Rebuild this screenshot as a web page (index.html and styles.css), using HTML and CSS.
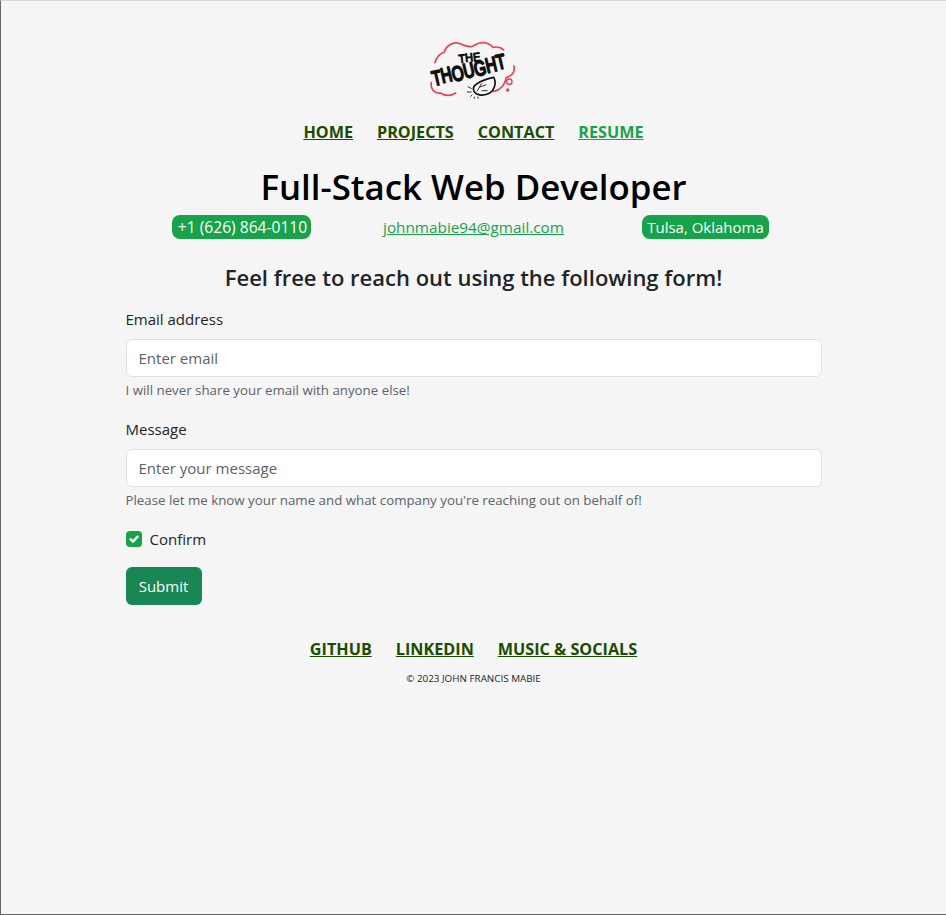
FILE: index.html
```html
<!DOCTYPE html>
<html lang="en">
<head>
<meta charset="utf-8">
<title>Contact</title>
<link rel="stylesheet" href="styles.css">
</head>
<body>
<div class="container">
  <header class="logo-row">
    <svg class="logo" width="96" height="60" viewBox="81 30 288 180" aria-label="The Thought">
      <path class="cloud" d="M108 98C112 82 124 70 136 66C140 48 162 34 180 40C194 46 208 54 222 48C242 34 266 34 282 52C292 50 304 50 314 60" />
      <path class="cloud" d="M97 158C94 176 106 192 124 189C138 198 156 198 170 189" />
      <path class="cloud" d="M345 108C349 124 340 138 322 142C318 164 304 180 283 185" />
      <circle class="cloud thin" cx="331" cy="155" r="8" />
      <circle class="dot" cx="326" cy="180" r="5" />
      <g class="logo-ink">
        <text class="logo-the" x="180" y="100" textLength="66" lengthAdjust="spacingAndGlyphs" transform="rotate(-6 180 100)" dy="0 -2 1">THE</text>
        <text class="logo-big" x="104" y="168" textLength="226" lengthAdjust="spacingAndGlyphs" transform="rotate(-13 104 168)" dy="0 -3 4 -2 2 -3 -2">THOUGHT</text>
      </g>
      <path class="ink" d="M236 160C250 150 268 146 284 142C294 158 286 184 266 192C250 198 232 196 225 184C220 174 226 166 236 160Z" />
      <path class="ink-thin" d="M234 184L248 160M240 172L262 164M248 182H266M206 170L218 176M204 186L218 186M214 200L220 194M226 206V200M238 206L236 200" />
    </svg>
  </header>
  <nav class="nav">
    <a class="nav-link" href="#">HOME</a>
    <a class="nav-link" href="#">PROJECTS</a>
    <a class="nav-link" href="#">CONTACT</a>
    <a class="nav-link nav-link-active" href="#">RESUME</a>
  </nav>
  <h1 class="title">Full-Stack Web Developer</h1>
  <div class="contact-row">
    <div class="contact-cell"><span class="pill pill-phone">+1 (626) 864-0110</span></div>
    <div class="contact-cell"><a class="email" href="#">johnmabie94@gmail.com</a></div>
    <div class="contact-cell"><span class="pill">Tulsa, Oklahoma</span></div>
  </div>
  <h2 class="subtitle">Feel free to reach out using the following form!</h2>
  <form class="form">
    <div class="field">
      <label class="label" for="email">Email address</label>
      <input class="input" id="email" type="email" placeholder="Enter email">
      <div class="help">I will never share your email with anyone else!</div>
    </div>
    <div class="field">
      <label class="label" for="message">Message</label>
      <input class="input" id="message" type="text" placeholder="Enter your message">
      <div class="help">Please let me know your name and what company you're reaching out on behalf of!</div>
    </div>
    <div class="check">
      <span class="checkbox">
        <svg width="16" height="16" viewBox="0 0 16 16"><path d="M4.5 8.2L7 10.6L11.6 5.6" fill="none" stroke="#fff" stroke-width="2.3" stroke-linecap="round" stroke-linejoin="round"/></svg>
      </span>
      <label class="check-label">Confirm</label>
    </div>
    <button class="submit" type="button">Submit</button>
  </form>
  <footer class="footer">
    <nav class="nav footer-nav">
      <a class="nav-link" href="#">GITHUB</a>
      <a class="nav-link" href="#">LINKEDIN</a>
      <a class="nav-link" href="#">MUSIC &amp; SOCIALS</a>
    </nav>
    <p class="copyright">© 2023 JOHN FRANCIS MABIE</p>
  </footer>
</div>
</body>
</html>
```
FILE: styles.css
```css
* { box-sizing: border-box; }
html, body { margin: 0; height: 100%; }
body {
  background: #f5f5f5;
  border-top: 1px solid #d8d8d8;
  border-left: 1px solid #666;
  border-bottom: 1px solid #666;
  font-family: "Open Sans", "Noto Sans", sans-serif;
  font-size: 15px;
  color: #212529;
  overflow: hidden;
}
.container { width: 720px; margin: 0 auto; padding: 0 12px; }
.logo-row { display: flex; justify-content: center; padding-top: 39px; height: 111px; }
.logo { display: block; }
.cloud { fill: none; stroke: #ee3f52; stroke-width: 5; stroke-linecap: round; }
.cloud.thin { stroke-width: 4; }
.dot { fill: #ee3f52; }
.logo-ink text { fill: #111; stroke: #111; stroke-linejoin: round; }
.logo-the { font: 400 36px "Liberation Sans", sans-serif; stroke-width: 3; }
.logo-big { font: 400 62px "Liberation Sans", sans-serif; stroke-width: 6; }
.ink { fill: none; stroke: #111; stroke-width: 5; }
.ink-thin { fill: none; stroke: #111; stroke-width: 2.5; }
.nav { display: flex; justify-content: center; gap: 24px; height: 40px; align-items: center; }
.nav-link { color: #1a4d00; font-weight: 700; font-size: 16.2px; text-decoration: underline; }
.nav-link-active { color: #16a34a; }
.title { margin: 11px 0 0; text-align: center; font-size: 34.8px; font-weight: 600; line-height: 48px; color: #000; height: 52px; }
.contact-row { display: grid; grid-template-columns: repeat(3, 1fr); height: 24px; }
.contact-cell { display: flex; justify-content: center; align-items: center; }
.pill { background: #16a34a; color: #fff; border-radius: 8px; height: 24px; line-height: 24px; padding: 0 5px; }
.pill-phone { padding: 0 4px 0 6px; font-size: 15.6px; }
.email { color: #16a34a; text-decoration: underline; font-size: 15.3px; }
.subtitle { margin: 23px 0 0; text-align: center; font-size: 22px; font-weight: 600; line-height: 30px; height: 30px; }
.form { margin-top: 15px; }
.field { margin-bottom: 16px; }
.label { display: block; line-height: 24px; height: 24px; margin-bottom: 8px; }
.input { display: block; width: 100%; height: 38px; border: 1px solid #dee2e6; border-radius: 6px; background: #fff; padding: 0 12px; font: inherit; color: #212529; outline: 0; }
.input::placeholder { color: #5c636a; opacity: 1; }
.help { font-size: 13.3px; color: #5c636a; margin-top: 3px; line-height: 20px; height: 21px; }
.check { display: flex; align-items: center; gap: 8px; height: 24px; margin-bottom: 16px; }
.checkbox { width: 16px; height: 16px; border-radius: 4px; background: #16a34a; display: block; }
.checkbox svg { display: block; }
.submit { display: block; width: 76px; height: 38px; border: 0; border-radius: 6px; background: #198754; color: #fff; font: inherit; padding: 0; }
.footer { margin-top: 24px; }
.copyright { margin: 0; text-align: center; font-size: 9.85px; line-height: 18px; color: #212529; }
```
